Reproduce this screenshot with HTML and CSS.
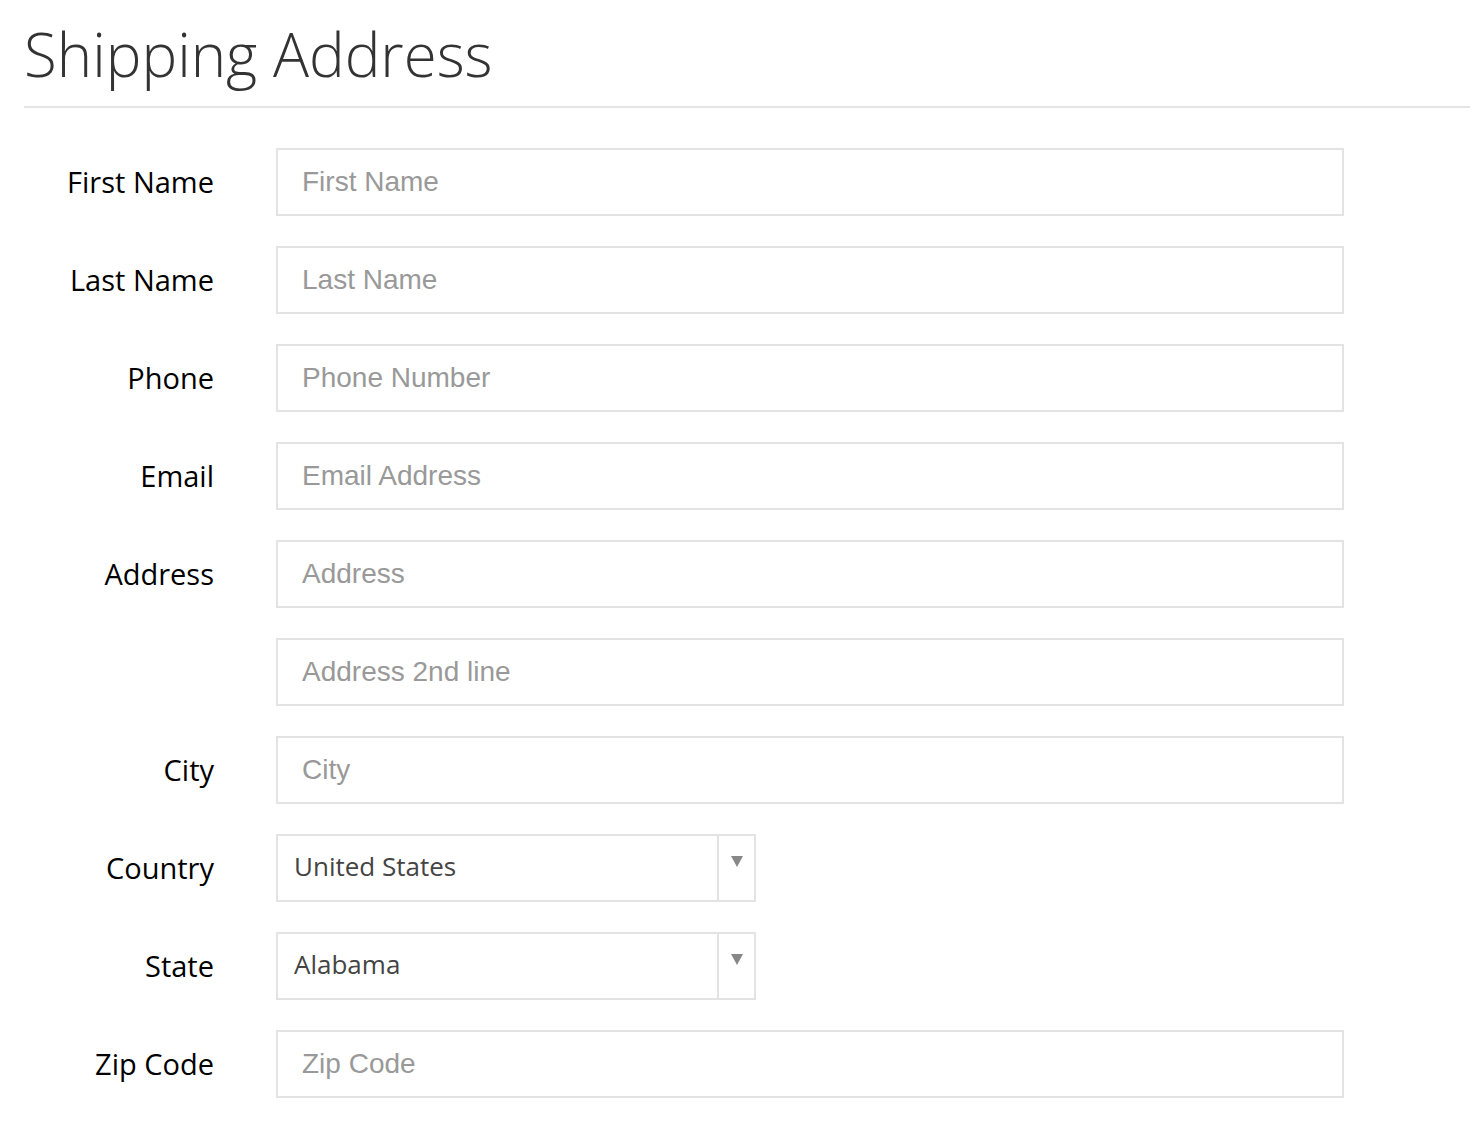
FILE: index.html
```html
<!DOCTYPE html>
<html>
<head>
<meta charset="utf-8">
<link rel="stylesheet" href="styles.css">
</head>
<body>
<div class="page">
  <h1 class="title">Shipping Address</h1>
  <form class="form">
    <label class="label">First Name</label>
    <input class="field" type="text" placeholder="First Name">
    <label class="label">Last Name</label>
    <input class="field" type="text" placeholder="Last Name">
    <label class="label">Phone</label>
    <input class="field" type="text" placeholder="Phone Number">
    <label class="label">Email</label>
    <input class="field" type="text" placeholder="Email Address">
    <label class="label">Address</label>
    <input class="field" type="text" placeholder="Address">
    <span class="label"></span>
    <input class="field" type="text" placeholder="Address 2nd line">
    <label class="label">City</label>
    <input class="field" type="text" placeholder="City">
    <label class="label">Country</label>
    <div class="select">
      <span class="select-text">United States</span>
      <span class="select-arrow"><svg width="12" height="11" viewBox="0 0 12 11"><path d="M0 0 L12 0 L6 11 Z" fill="#888"/></svg></span>
    </div>
    <label class="label">State</label>
    <div class="select">
      <span class="select-text">Alabama</span>
      <span class="select-arrow"><svg width="12" height="11" viewBox="0 0 12 11"><path d="M0 0 L12 0 L6 11 Z" fill="#888"/></svg></span>
    </div>
    <label class="label">Zip Code</label>
    <input class="field" type="text" placeholder="Zip Code">
  </form>
</div>
</body>
</html>
```
FILE: styles.css
```css
html, body {
  margin: 0;
  padding: 0;
  background: #fff;
}
.page {
  padding: 0 12px 0 24px;
}
.title {
  margin: 0;
  padding-top: 18px;
  height: 108px;
  box-sizing: border-box;
  font-family: "Open Sans", sans-serif;
  font-weight: 300;
  font-size: 60px;
  line-height: 72px;
  color: #333;
  border-bottom: 2px solid #e5e5e5;
}
.form {
  display: grid;
  grid-template-columns: 190px 1068px;
  column-gap: 62px;
  row-gap: 30px;
  padding-top: 40px;
  align-items: center;
}
.label {
  text-align: right;
  font-family: "Open Sans", sans-serif;
  font-size: 29px;
  color: #000;
  padding-bottom: 2px;
}
.field {
  box-sizing: border-box;
  height: 68px;
  width: 1068px;
  border: 2px solid #e3e3e3;
  padding: 0 24px;
  font-family: "Liberation Sans", Arial, sans-serif;
  font-size: 28px;
  color: #333;
  outline: none;
  margin: 0;
}
.field::placeholder {
  color: #999;
}
.select {
  box-sizing: border-box;
  width: 480px;
  height: 68px;
  border: 2px solid #e3e3e3;
  display: flex;
  align-items: center;
}
.select-text {
  flex: 1;
  padding-left: 16px;
  padding-bottom: 4px;
  font-family: "Open Sans", sans-serif;
  font-size: 26px;
  color: #444;
}
.select-arrow {
  width: 37px;
  height: 100%;
  border-left: 2px solid #e3e3e3;
  display: flex;
  justify-content: center;
  align-items: flex-start;
  padding-top: 20px;
  box-sizing: border-box;
}
.select-arrow svg {
  display: block;
}
```
